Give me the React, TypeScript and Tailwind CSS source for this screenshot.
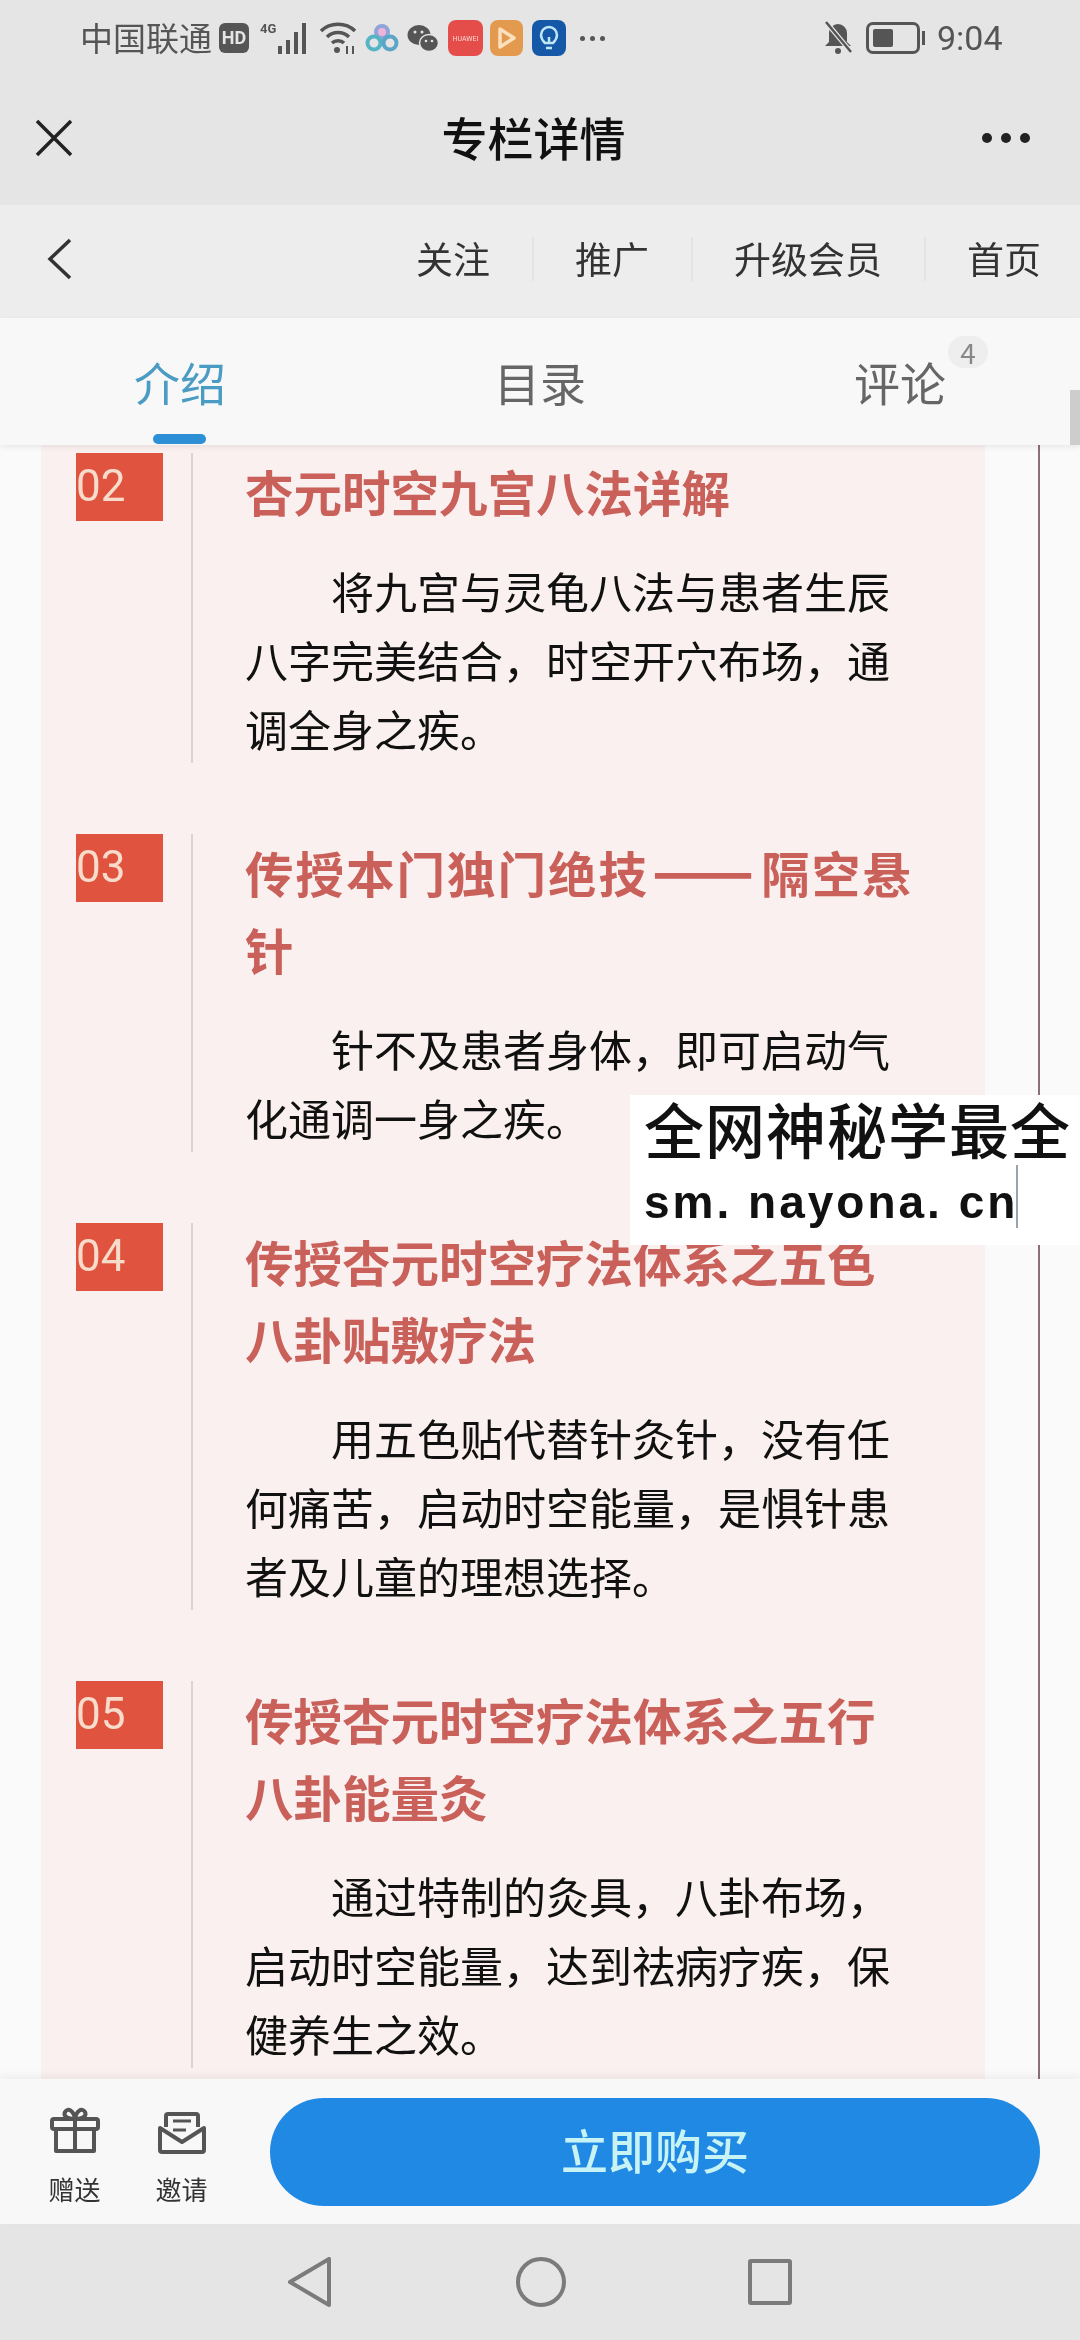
import { Fragment } from "react";

type Section = {
  no: string;
  title: string[];
  body: string;
};

const sections: Section[] = [
  {
    no: "02",
    title: ["杏元时空九宫八法详解"],
    body: "将九宫与灵龟八法与患者生辰八字完美结合，时空开穴布场，通调全身之疾。",
  },
  {
    no: "03",
    title: ["传授本门独门绝技——隔空悬", "针"],
    body: "针不及患者身体，即可启动气化通调一身之疾。",
  },
  {
    no: "04",
    title: ["传授杏元时空疗法体系之五色", "八卦贴敷疗法"],
    body: "用五色贴代替针灸针，没有任何痛苦，启动时空能量，是惧针患者及儿童的理想选择。",
  },
  {
    no: "05",
    title: ["传授杏元时空疗法体系之五行", "八卦能量灸"],
    body: "通过特制的灸具，八卦布场，启动时空能量，达到祛病疗疾，保健养生之效。",
  },
];

const StatusBar = () => (
  <div className="h-[76px] flex items-center pl-[80px] pr-[77px] text-[#555] text-[33px]">
    <span className="w-[136px] whitespace-nowrap">中国联通</span>
    <span className="ml-[3px] w-[30px] h-[30px] rounded-[6px] bg-[#555] text-[#e5e5e5] text-[18px] font-bold leading-[30px] text-center font-['Roboto',sans-serif]">
      HD
    </span>
    <svg className="ml-[11px]" width="50" height="32" viewBox="0 0 50 32" fill="#555">
      <text x="0" y="11" fontSize="13" fontWeight="700" fontFamily="Roboto, sans-serif">4G</text>
      <rect x="18" y="24" width="4" height="8" />
      <rect x="26" y="18" width="4" height="14" />
      <rect x="34" y="10" width="4" height="22" />
      <rect x="42" y="1" width="4" height="31" />
    </svg>
    <svg className="ml-[10px]" width="38" height="34" viewBox="0 0 38 34" fill="none" stroke="#555" strokeWidth="3.5">
      <path d="M1 10C10 1 26 1 35 10" />
      <path d="M7 16C13 10 23 10 29 16" />
      <path d="M12 22C15 19 21 19 24 22" />
      <circle cx="17" cy="29" r="3" fill="#555" stroke="none" />
      <path d="M27 25V33M33 25V33" strokeWidth="2" />
    </svg>
    <svg className="ml-[7px]" width="34" height="28" viewBox="0 0 34 28" fill="none" strokeWidth="4">
      <circle cx="17" cy="8" r="6" stroke="#8fa4d8" fill="#efb4dc" />
      <circle cx="9" cy="19" r="6.5" stroke="#55b5c5" />
      <circle cx="25" cy="19" r="6.5" stroke="#5aa5c8" />
    </svg>
    <svg className="ml-[8px]" width="32" height="28" viewBox="0 0 32 28" fill="#555">
      <ellipse cx="12" cy="11" rx="11.5" ry="10" />
      <ellipse cx="22" cy="19" rx="9.5" ry="8.5" stroke="#e5e5e5" strokeWidth="1.5" />
      <circle cx="8" cy="8" r="1.5" fill="#e5e5e5" />
      <circle cx="15" cy="8" r="1.5" fill="#e5e5e5" />
      <circle cx="19" cy="17" r="1.3" fill="#e5e5e5" />
      <circle cx="25" cy="17" r="1.3" fill="#e5e5e5" />
    </svg>
    <span className="ml-[9px] w-[35px] h-[36px] rounded-[8px] bg-[#e54d4a] text-[#f8d8d0] text-[7px] pt-[16px] leading-none text-center font-['Roboto',sans-serif]">
      HUAWEI
    </span>
    <span className="ml-[7px] w-[33px] h-[36px] rounded-[8px] bg-[#e39a4e] flex items-center justify-center">
      <svg width="20" height="24" viewBox="0 0 20 24" fill="none" stroke="#fbe0bd" strokeWidth="3.5" strokeLinejoin="round">
        <path d="M3 3L17 12L3 21Z" />
      </svg>
    </span>
    <span className="ml-[9px] w-[34px] h-[36px] rounded-[8px] bg-[#1558a8] flex items-center justify-center">
      <svg width="20" height="26" viewBox="0 0 20 26" fill="none" stroke="#bfe6f5" strokeWidth="2.5">
        <path d="M6 18C3 15 2 13 2 10a8 8 0 0 1 16 0c0 3-1 5-4 8Z" />
        <path d="M7 23h6M10 18v-6" />
      </svg>
    </span>
    <span className="ml-[14px] flex gap-[5px]">
      <i className="w-[5px] h-[5px] rounded-full bg-[#555]" />
      <i className="w-[5px] h-[5px] rounded-full bg-[#555]" />
      <i className="w-[5px] h-[5px] rounded-full bg-[#555]" />
    </span>
    <svg className="ml-auto" width="30" height="34" viewBox="0 0 30 34" fill="#555">
      <path d="M15 3a9 9 0 0 1 9 9v9l4 4H2l4-4v-9a9 9 0 0 1 9-9Z" />
      <circle cx="15" cy="30" r="3" />
      <path d="M3 1L28 31" stroke="#e5e5e5" strokeWidth="5" />
      <path d="M3 1L28 31" stroke="#555" strokeWidth="2.5" />
    </svg>
    <span className="ml-[13px] w-[54px] h-[32px] rounded-[7px] border-[3px] border-[#555] p-[4px]">
      <span className="block w-[20px] h-full rounded-[2px] bg-[#555]" />
    </span>
    <span className="ml-[2px] w-[3px] h-[14px] bg-[#555]" />
    <span className="ml-[12px] w-[66px] text-[34px] whitespace-nowrap font-['Roboto',sans-serif]">9:04</span>
  </div>
);

const TitleBar = () => (
  <div className="h-[129px] relative flex items-center justify-between pl-[35px] pr-[50px] pb-[6px]">
    <svg width="38" height="38" viewBox="0 0 38 38" fill="none" stroke="#222" strokeWidth="3.5">
      <path d="M2 2L36 36M36 2L2 36" />
    </svg>
    <span className="ml-[12px] mb-[4px] text-[46px] leading-none font-medium text-[#111]">专栏详情</span>
    <span className="flex gap-[9px]">
      <i className="w-[10px] h-[10px] rounded-full bg-[#222]" />
      <i className="w-[10px] h-[10px] rounded-full bg-[#222]" />
      <i className="w-[10px] h-[10px] rounded-full bg-[#222]" />
    </span>
  </div>
);

const links = ["关注", "推广", "升级会员", "首页"];

const SubNav = () => (
  <div className="h-[113px] bg-[#ededed] flex items-center pl-[47px] pr-[39px] pb-[6px]">
    <svg width="25" height="42" viewBox="0 0 25 42" fill="none" stroke="#333" strokeWidth="3.5">
      <path d="M23 2L3 21L23 40" />
    </svg>
    <div className="ml-auto flex items-center text-[37px] text-[#333]">
      {links.map((link, i) => (
        <Fragment key={link}>
          {i > 0 && <span className="mx-[41.5px] w-[2px] h-[44px] bg-[#e4e4e4]" />}
          <span className="whitespace-nowrap">{link}</span>
        </Fragment>
      ))}
    </div>
  </div>
);

const Tabs = () => (
  <div className="relative z-10 h-[127px] bg-[#f8f8f8] grid grid-cols-3 items-center text-center text-[46px] text-[#666] shadow-[0_2px_6px_rgba(0,0,0,0.08)]">
    <div className="relative text-[#4a9cc4]">
      介绍
      <span className="absolute left-[153px] top-[87px] w-[53px] h-[10px] rounded-full bg-[#2d8fd5]" />
    </div>
    <div>目录</div>
    <div className="relative">
      评论
      <span className="absolute left-[228px] top-[-11px] w-[40px] h-[32px] rounded-full bg-[#eeeeee] text-[#888] text-[28px] leading-[32px]">
        4
      </span>
    </div>
    <span className="absolute right-0 top-[72px] w-[10px] h-[55px] bg-[#cdcdcd]" />
  </div>
);

const SectionBlock = ({ no, title, body }: Section) => (
  <div className="flex">
    <div className="w-[115px] shrink-0">
      <div className="w-[87px] h-[68px] bg-[#e0533f] text-[#f7dccb] text-[44px] leading-[66px] font-['Roboto',sans-serif]">
        {no}
      </div>
    </div>
    <div className="border-l-2 border-[#e2cfd2] pl-[52px] w-[720px]">
      <h3 className="text-[48.5px] leading-[77px] font-bold text-[#c9605a] whitespace-nowrap">
        {title.map((line) =>
          line.includes("——") ? (
            <div key={line} className="tracking-[2px]">
              {line.split("——")[0]}
              <span className="ml-[3px] mr-[5px] text-[60px] leading-[0]">——</span>
              {line.split("——")[1]}
            </div>
          ) : (
            <div key={line}>{line}</div>
          ),
        )}
      </h3>
      <p className="mt-[26px] w-[650px] text-[43px] leading-[69px] text-[#111] indent-[86px]">{body}</p>
    </div>
  </div>
);

const Content = () => (
  <div className="relative flex-1 min-h-0 overflow-hidden bg-[#fafafa]">
    <div className="w-[1040px] h-full border-r-2 border-[#8d6f78] pl-[41px]">
      <div className="w-[944px] h-full bg-[#faf0ef] pl-[35px] pt-[8px] flex flex-col gap-[71px]">
        {sections.map((s) => (
          <SectionBlock key={s.no} {...s} />
        ))}
      </div>
    </div>
    <div className="absolute left-[630px] top-[650px] w-[450px] h-[150px] bg-white pl-[14px] text-[#111]">
      <div className="text-[60px] leading-[66px] font-medium whitespace-nowrap tracking-[1px]">全网神秘学最全</div>
      <div className="flex items-start mt-[8px]">
        <span className="text-[46px] leading-[66px] font-bold tracking-[3px] font-['Liberation_Sans',sans-serif] whitespace-nowrap">
          sm. nayona. cn
        </span>
        <span className="w-[2px] h-[63px] -mt-[4px] -ml-[2px] bg-[#9aa3ad]" />
      </div>
    </div>
  </div>
);

const BottomBar = () => (
  <div className="relative z-10 h-[145px] bg-[#f8f8f8] flex pl-[48px] pr-[40px] pt-[19px] shadow-[0_-4px_8px_rgba(0,0,0,0.05)]">
    <div className="w-[53px] mt-[9px] flex flex-col items-center text-[26px] leading-none text-[#333]">
      <svg width="50" height="46" viewBox="0 0 50 46" fill="none" stroke="#555" strokeWidth="4" strokeLinejoin="round">
        <rect x="2" y="12" width="46" height="10" rx="2" />
        <path d="M6 22V44H44V22M25 12V44" />
        <path d="M25 12C17 12 13 9 15 5C18 0 24 4 25 12C26 4 32 0 35 5C37 9 33 12 25 12Z" />
      </svg>
      <span className="mt-[23px] whitespace-nowrap">赠送</span>
    </div>
    <div className="ml-[54px] w-[53px] mt-[14px] flex flex-col items-center text-[26px] leading-none text-[#333]">
      <svg width="48" height="42" viewBox="0 0 48 42" fill="none" stroke="#555" strokeWidth="4" strokeLinejoin="round">
        <path d="M8 15V4a2 2 0 0 1 2-2H38a2 2 0 0 1 2 2V15" />
        <path d="M2 16V38a2 2 0 0 0 2 2H44a2 2 0 0 0 2-2V16L24 30L2 16Z" />
        <path d="M15 9H33M15 18H28" strokeWidth="3" />
      </svg>
      <span className="mt-[22px] whitespace-nowrap">邀请</span>
    </div>
    <div className="ml-[62px] flex-1 h-[108px] rounded-full bg-[#2089e4] flex items-center justify-center text-[47px] font-medium text-[#c8f3f5] pb-[6px]">
      立即购买
    </div>
  </div>
);

const NavBar = () => (
  <div className="h-[116px] bg-[#e5e5e5] flex items-center pl-[288px]">
    <svg width="44" height="50" viewBox="0 0 44 50" fill="none" stroke="#7b7b7b" strokeWidth="4" strokeLinejoin="round">
      <path d="M41 2V48L2 25Z" />
    </svg>
    <svg className="ml-[184px]" width="50" height="50" viewBox="0 0 50 50" fill="none" stroke="#7b7b7b" strokeWidth="4">
      <circle cx="25" cy="25" r="23" />
    </svg>
    <div className="ml-[182px] w-[44px] h-[46px] border-[4px] border-[#7b7b7b] rounded-[3px]" />
  </div>
);

export default function App() {
  return (
    <div className="w-[1080px] h-[2340px] flex flex-col overflow-hidden bg-[#e5e5e5] blur-[0.5px] font-['Noto_Sans_CJK_SC','Noto_Sans',sans-serif]">
      <StatusBar />
      <TitleBar />
      <SubNav />
      <Tabs />
      <Content />
      <BottomBar />
      <NavBar />
    </div>
  );
}
